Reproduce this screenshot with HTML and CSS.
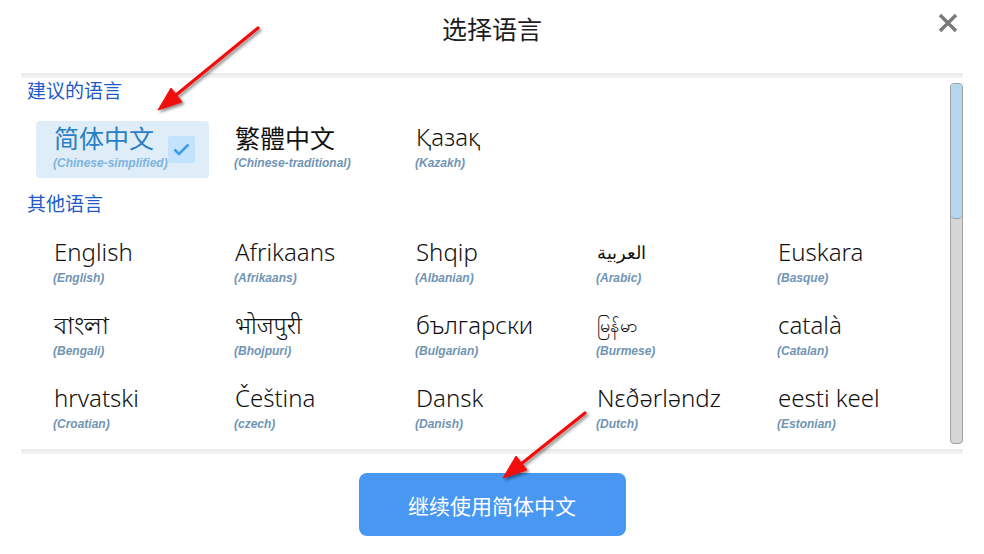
FILE: index.html
```html
<!DOCTYPE html>
<html lang="zh">
<head>
    <meta charset="UTF-8">
    <meta name="viewport" content="width=device-width, initial-scale=1.0">
    <title>选择语言</title>
    <link rel="stylesheet" href="styles.css">
</head>
<body>

<div class="dialog">
    <div class="header">
        <span></span>
        <h1 class="title">选择语言</h1>
        <button class="close" aria-label="close">
            <svg width="20" height="20" viewBox="0 0 20 20">
                <path d="M2 2 L18 18 M18 2 L2 18" stroke="#7a7a7a" stroke-width="3.4" stroke-linecap="butt"/>
            </svg>
        </button>
    </div>

    <div class="sep"></div>

    <div class="scroller">
        <div class="list">
            <div class="group-label">建议的语言</div>
            <div class="grid">
                <div class="lang selected">
                    <div>
                        <div class="name cjk">简体中文</div>
                        <div class="sub">(Chinese-simplified)</div>
                    </div>
                    <span class="check">
                        <svg width="17" height="13" viewBox="0 0 17 13">
                            <path d="M1.5 6.5 L6 11 L15.5 1.5" fill="none" stroke="#3c9ce8" stroke-width="2.6"/>
                        </svg>
                    </span>
                </div>
                <div class="lang">
                    <div class="name cjk">繁體中文</div>
                    <div class="sub">(Chinese-traditional)</div>
                </div>
                <div class="lang">
                    <div class="name">Қазақ</div>
                    <div class="sub">(Kazakh)</div>
                </div>
            </div>

            <div class="group-label other">其他语言</div>
            <div class="grid rows">
                <div class="lang"><div class="name">English</div><div class="sub">(English)</div></div>
                <div class="lang"><div class="name">Afrikaans</div><div class="sub">(Afrikaans)</div></div>
                <div class="lang"><div class="name">Shqip</div><div class="sub">(Albanian)</div></div>
                <div class="lang"><div class="name small">العربية</div><div class="sub">(Arabic)</div></div>
                <div class="lang"><div class="name">Euskara</div><div class="sub">(Basque)</div></div>

                <div class="lang"><div class="name">বাংলা</div><div class="sub">(Bengali)</div></div>
                <div class="lang"><div class="name">भोजपुरी</div><div class="sub">(Bhojpuri)</div></div>
                <div class="lang"><div class="name">български</div><div class="sub">(Bulgarian)</div></div>
                <div class="lang"><div class="name small">မြန်မာ</div><div class="sub">(Burmese)</div></div>
                <div class="lang"><div class="name">català</div><div class="sub">(Catalan)</div></div>

                <div class="lang"><div class="name">hrvatski</div><div class="sub">(Croatian)</div></div>
                <div class="lang"><div class="name">Čeština</div><div class="sub">(czech)</div></div>
                <div class="lang"><div class="name">Dansk</div><div class="sub">(Danish)</div></div>
                <div class="lang"><div class="name">Nɛðərləndz</div><div class="sub">(Dutch)</div></div>
                <div class="lang"><div class="name">eesti keel</div><div class="sub">(Estonian)</div></div>
            </div>
        </div>

        <div class="scrollbar">
            <div class="thumb"></div>
        </div>
    </div>

    <div class="sep"></div>

    <div class="footer">
        <button class="continue">继续使用简体中文</button>
    </div>
</div>

<!-- annotation arrows drawn over the screenshot -->
<svg class="arrows" width="984" height="554" viewBox="0 0 984 554">
    <defs>
        <filter id="shadow" x="-20%" y="-20%" width="140%" height="140%">
            <feDropShadow dx="2" dy="2" stdDeviation="1.5" flood-color="#000" flood-opacity="0.45"/>
        </filter>
    </defs>
    <g filter="url(#shadow)" fill="#f20d0d" stroke="#f20d0d">
        <line x1="258" y1="28" x2="176" y2="95" stroke-width="3.2" stroke-linecap="round"/>
        <polygon points="158,110 182,102 171,88" stroke-width="1"/>
        <line x1="585" y1="413" x2="521" y2="464" stroke-width="3.2" stroke-linecap="round"/>
        <polygon points="503,478 527,470 516,456" stroke-width="1"/>
    </g>
</svg>

</body>
</html>
```

FILE: styles.css
```css
body {
    margin: 0;
    background: #fff;
    font-family: "Noto Sans", "Noto Sans CJK SC", sans-serif;
    color: #1c1c1c;
}

.dialog {
    width: 984px;
    height: 554px;
    display: flex;
    flex-direction: column;
}

.header {
    height: 60px;
    margin-bottom: 13px;
    display: grid;
    grid-template-columns: 1fr auto 1fr;
    align-items: center;
}

.title {
    margin: 0 0 4px;
    font-family: "Noto Sans CJK SC", sans-serif;
    font-size: 25px;
    font-weight: 400;
    color: #1d1d1d;
    line-height: 32px;
}

.close {
    justify-self: end;
    align-self: start;
    margin: 13px 26px 0 0;
    padding: 0;
    border: none;
    background: none;
    width: 20px;
    height: 20px;
    cursor: pointer;
}

.sep {
    height: 5px;
    margin: 0 21px;
    background: linear-gradient(to bottom, #e9e9e9, #f5f5f5);
}

.scroller {
    height: 371px;
    margin: 0 20px 0 21px;
    display: flex;
}

.list {
    flex: 1;
    padding-left: 6px;
}

.group-label {
    font-family: "Noto Sans CJK SC", sans-serif;
    font-size: 19px;
    line-height: 22px;
    color: #2159c9;
    padding-top: 1px;
    margin-bottom: 20px;
}

.group-label.other {
    padding-top: 0;
    margin-top: 14px;
    margin-bottom: 22px;
}

.grid {
    margin-left: 9px;
    display: grid;
    grid-template-columns: repeat(5, 173px);
    column-gap: 8px;
}

.grid.rows {
    row-gap: 16px;
}

.lang {
    padding: 1px 14px 7px 18px;
    border-radius: 4px;
    white-space: nowrap;
}

.lang .name {
    font-size: 24px;
    font-weight: 350;
    line-height: 30px;
    color: #111;
}

.lang .name.cjk {
    font-family: "Noto Sans CJK SC", sans-serif;
    font-size: 25px;
    font-weight: 400;
}

.lang .name.small {
    font-size: 18px;
}

.lang .sub {
    margin-top: 3px;
    margin-left: -1px;
    font-family: "Liberation Sans", Arial, sans-serif;
    font-size: 12px;
    font-weight: 700;
    font-style: italic;
    line-height: 16px;
    color: #7095b4;
}

.lang.selected {
    background: #deedf8;
    display: flex;
    align-items: center;
    justify-content: space-between;
}

.lang.selected .name {
    color: #2a7ec5;
}

.lang.selected .sub {
    color: #80b4de;
}

.check {
    width: 27px;
    height: 27px;
    margin-top: 6px;
    border-radius: 3px;
    background: #c2e3fb;
    display: flex;
    align-items: center;
    justify-content: center;
}

.scrollbar {
    width: 11px;
    margin: 5px 1px 5px 0;
    border: 1px solid #a0a0a0;
    border-radius: 4px;
    background: #d6d6d6;
    overflow: hidden;
}

.thumb {
    height: 134px;
    background: #b4d7ef;
    border-bottom: 1px solid #8fa5b5;
    border-radius: 0 0 4px 4px;
}

.footer {
    flex: 1;
    display: flex;
    justify-content: center;
    align-items: flex-start;
    padding-top: 19px;
}

.continue {
    width: 267px;
    height: 63px;
    border: none;
    border-radius: 8px;
    background: #4897f3;
    color: #fff;
    font-family: "Noto Sans CJK SC", sans-serif;
    font-size: 21px;
    cursor: pointer;
}

.arrows {
    position: absolute;
    top: 0;
    left: 0;
    pointer-events: none;
}
```
